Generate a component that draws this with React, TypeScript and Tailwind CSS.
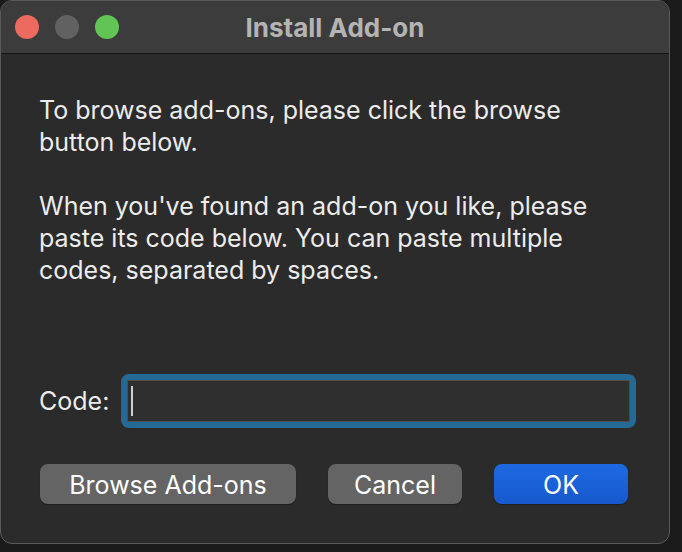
import React from "react";

const FONT = { fontFamily: "Inter, 'Noto Sans', 'Liberation Sans', sans-serif" };

function TrafficLights() {
  return (
    <div className="absolute left-[14px] top-[14px] flex gap-[16px]">
      <span className="block h-[24px] w-[24px] rounded-full bg-[#ec6a5e]" />
      <span className="block h-[24px] w-[24px] rounded-full bg-[#616161]" />
      <span className="block h-[24px] w-[24px] rounded-full bg-[#61c454]" />
    </div>
  );
}

function Button({ label, primary, w }: { label: string; primary?: boolean; w: string }) {
  return (
    <button
      className={
        "h-[40px] rounded-[8px] pt-[2px] text-[25px] leading-none text-white " +
        w +
        (primary
          ? " bg-gradient-to-b from-[#1d69e2] to-[#1759cd] shadow-[0_1px_1px_rgba(0,0,0,0.3)]"
          : " bg-[#646464] shadow-[0_1px_1px_rgba(0,0,0,0.3)]")
      }
    >
      {label}
    </button>
  );
}

export default function App() {
  return (
    <div className="h-[552px] w-[682px] overflow-hidden bg-[#1b1b1b]" style={FONT}>
      <div className="flex h-[544px] w-[670px] flex-col overflow-hidden rounded-[12px] border border-[#5a5a5a] bg-[#2b2b2b]">
        <div className="relative flex h-[53px] shrink-0 items-center justify-center border-b border-[#141414] bg-[#3c3c3c]">
          <TrafficLights />
          <span className="text-[26px] font-bold text-[#b4b4b4]">Install Add-on</span>
        </div>

        <div className="flex flex-col pl-[38px] pt-[40px] text-[25px] leading-[32px] text-[#ececec]">
          <p>
            To browse add-ons, please click the browse
            <br />
            button below.
          </p>
          <p className="mt-[32px]">
            When you've found an add-on you like, please
            <br />
            paste its code below. You can paste multiple
            <br />
            codes, separated by spaces.
          </p>

          <div className="mt-[88px] flex items-center">
            <label className="w-[82px] text-[25px] text-[#ececec]">Code:</label>
            <div className="h-[54px] w-[515px] rounded-[8px] bg-[#256a94] p-[6px]">
              <div className="flex h-[42px] items-center border border-[#4e4e4e] bg-[#2f2f2f] pl-[3px]">
                <span className="block h-[30px] w-[2px] bg-[#d0d0d0]" />
              </div>
            </div>
          </div>

          <div className="mt-[36px] flex gap-[32px] pl-[1px]">
            <Button label="Browse Add-ons" w="w-[256px]" />
            <Button label="Cancel" w="w-[134px]" />
            <Button label="OK" primary w="w-[134px]" />
          </div>
        </div>
      </div>
    </div>
  );
}
